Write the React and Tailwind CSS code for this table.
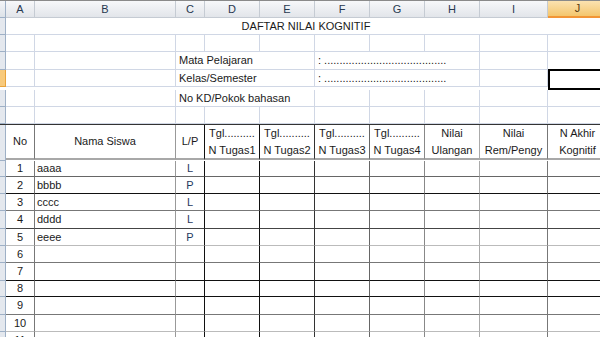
const COLS = [
  { key: "A", w: 29 },
  { key: "B", w: 141 },
  { key: "C", w: 29 },
  { key: "D", w: 55 },
  { key: "E", w: 55 },
  { key: "F", w: 55 },
  { key: "G", w: 55 },
  { key: "H", w: 55 },
  { key: "I", w: 68 },
  { key: "J", w: 60 },
];

// vertical rule colour after each column inside the bordered table
const VLINE = ["#777", "#999", "#111", "#111", "#333", "#666", "#888", "#aaa", "#777", "#ccc"];

const students = [
  { no: 1, nama: "aaaa", jk: "L" },
  { no: 2, nama: "bbbb", jk: "P" },
  { no: 3, nama: "cccc", jk: "L" },
  { no: 4, nama: "dddd", jk: "L" },
  { no: 5, nama: "eeee", jk: "P" },
];

// data rows: height and colour of the rule below
const ROWS = [
  { h: 16, line: "#666" },
  { h: 17, line: "#111" },
  { h: 17, line: "#777" },
  { h: 18, line: "#444" },
  { h: 17, line: "#bbb" },
  { h: 17, line: "#777" },
  { h: 18, line: "#111" },
  { h: 16, line: "#111" },
  { h: 18, line: "#777" },
  { h: 17, line: "#bbb" },
  { h: 17, line: "#777" },
];

const DOTS = ": ........................................";

function RowHead({ n, h, active }) {
  return (
    <div
      className={`w-[6px] shrink-0 flex justify-end overflow-hidden border-r border-b text-[10px] leading-none items-center ${
        active ? "bg-[#f8ca7c] border-[#e8a33c]" : "bg-[#e4e8ee] border-[#9eb0c6]"
      }`}
      style={{ height: h }}
    >
      <span className="shrink-0 w-[14px] text-right text-[#5b7fb0] -mr-[11px]">{n}</span>
    </div>
  );
}

function PlainRow({ n, h, active, children }) {
  return (
    <div className="flex">
      <RowHead n={n} h={h} active={active} />
      {children}
    </div>
  );
}

function GridCell({ w, h, right = true, children, className = "" }) {
  return (
    <div
      className={`shrink-0 border-b border-[#d0d7e5] flex items-center ${right ? "border-r" : ""} ${className}`}
      style={{ width: w, height: h }}
    >
      {children}
    </div>
  );
}

export default function App() {
  const w = (i) => COLS[i].w;
  const span = (a, b) => COLS.slice(a, b + 1).reduce((s, c) => s + c.w, 0);

  return (
    <div className="w-[600px] h-[337px] overflow-hidden bg-white text-[11px] text-[#1a1a1a] font-['Liberation_Sans',Arial,sans-serif]">
      {/* column letters */}
      <div className="flex h-[18px] border-t border-[#8a8a8a]">
        <div className="w-[6px] shrink-0 bg-gradient-to-b from-[#f3f5f8] to-[#dde2e8] border-r border-b border-[#9eb0c6]" />
        {COLS.map((c) =>
          c.key === "J" ? (
            <div
              key={c.key}
              className="shrink-0 flex items-center justify-center bg-gradient-to-b from-[#fbe2b0] to-[#f4c66c] border-b-2 border-[#f29536] border-r border-r-[#e0b060] text-[#5a3a10]"
              style={{ width: c.w }}
            >
              {c.key}
            </div>
          ) : (
            <div
              key={c.key}
              className="shrink-0 flex items-center justify-center bg-gradient-to-b from-[#f7f8fa] to-[#e2e5ea] border-r border-b border-[#c5cbd3] text-[#27384f]"
              style={{ width: c.w }}
            >
              {c.key}
            </div>
          )
        )}
      </div>

      {/* row 1: title across the sheet */}
      <PlainRow n={1} h={17}>
        <GridCell w={span(0, 9)} h={17} right={false} className="justify-center">
          <span className="-translate-x-[1px]">DAFTAR NILAI KOGNITIF</span>
        </GridCell>
      </PlainRow>

      {/* row 2: empty */}
      <PlainRow n={2} h={17}>
        {COLS.map((c) => (
          <GridCell key={c.key} w={c.w} h={17} />
        ))}
      </PlainRow>

      {/* rows 3-5: identity lines */}
      <PlainRow n={3} h={18}>
        <GridCell w={w(0)} h={18} />
        <GridCell w={w(1)} h={18} />
        <GridCell w={span(2, 4)} h={18} className="pl-[3px]">Mata Pelajaran</GridCell>
        <GridCell w={span(5, 7)} h={18} className="pl-[3px]">{DOTS}</GridCell>
        <GridCell w={w(8)} h={18} />
        <GridCell w={w(9)} h={18} />
      </PlainRow>
      <PlainRow n={4} h={17} active>
        <GridCell w={w(0)} h={17} />
        <GridCell w={w(1)} h={17} />
        <GridCell w={span(2, 4)} h={17} className="pl-[3px]">Kelas/Semester</GridCell>
        <GridCell w={span(5, 7)} h={17} className="pl-[3px]">{DOTS}</GridCell>
        <GridCell w={w(8)} h={17} />
        <div className="shrink-0 h-[17px] border-2 border-black -mt-[1px] box-content" style={{ width: w(9) - 4 }} />
      </PlainRow>
      <PlainRow n={5} h={17}>
        <GridCell w={w(0)} h={17} />
        <GridCell w={w(1)} h={17} />
        <GridCell w={span(2, 4)} h={17} className="pl-[3px]">No KD/Pokok bahasan</GridCell>
        {COLS.slice(5).map((c) => (
          <GridCell key={c.key} w={c.w} h={17} />
        ))}
      </PlainRow>

      {/* row 6: empty */}
      <PlainRow n={6} h={17}>
        {COLS.map((c) => (
          <GridCell key={c.key} w={c.w} h={17} />
        ))}
      </PlainRow>

      {/* row 7: table heading */}
      <div className="flex border-t border-[#333]">
        <RowHead n={7} h={36} />
        {[
          ["No"],
          ["Nama Siswa"],
          ["L/P"],
          ["Tgl..........", "N Tugas1"],
          ["Tgl..........", "N Tugas2"],
          ["Tgl..........", "N Tugas3"],
          ["Tgl..........", "N Tugas4"],
          ["Nilai", "Ulangan"],
          ["Nilai", "Rem/Pengy"],
          ["N Akhir", "Kognitif"],
        ].map((lines, i) => (
          <div
            key={i}
            className="shrink-0 h-[35px] border-b-2 border-b-[#a8a8a8] border-r flex flex-col justify-center items-center leading-[17px] whitespace-nowrap"
            style={{ width: COLS[i].w, borderRightColor: VLINE[i] }}
          >
            {lines.map((t) => (
              <span key={t}>{t}</span>
            ))}
          </div>
        ))}
      </div>

      {/* student rows */}
      {ROWS.map((r, idx) => {
        const s = students[idx];
        return (
          <div key={idx} className="flex">
            <RowHead n={8 + idx} h={r.h} />
            {COLS.map((c, i) => (
              <div
                key={c.key}
                className="shrink-0 border-r border-b flex items-center"
                style={{ width: c.w, height: r.h, borderRightColor: VLINE[i], borderBottomColor: r.line }}
              >
                {i === 0 && <span className="w-full text-center">{idx + 1}</span>}
                {i === 1 && s && <span className="pl-[2px]">{s.nama}</span>}
                {i === 2 && s && <span className="w-full text-center text-[#1f3a60]">{s.jk}</span>}
              </div>
            ))}
          </div>
        );
      })}
    </div>
  );
}
